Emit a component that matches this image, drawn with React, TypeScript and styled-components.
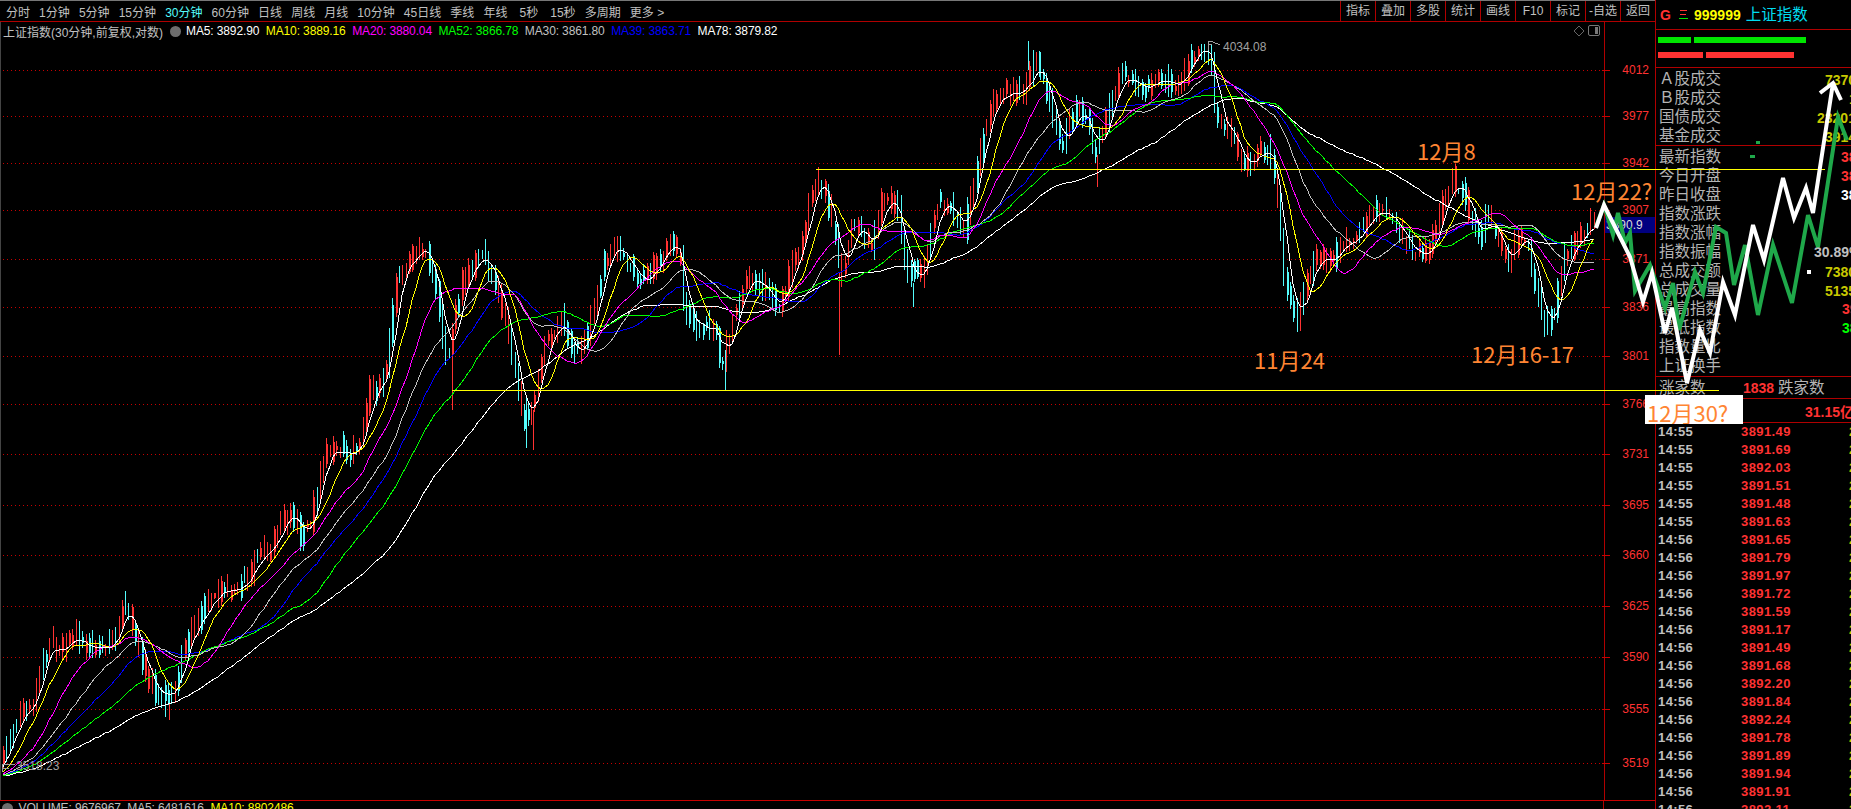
import React from "react";
import styled, { createGlobalStyle } from "styled-components";

const RED_LINE = "#b00000";
const CHART_TOP = 22;
const BAR_STEP = 3.3;

const leftTabs = ["分时", "1分钟", "5分钟", "15分钟", "30分钟", "60分钟", "日线", "周线", "月线", "10分钟", "45日线", "季线", "年线", "5秒", "15秒", "多周期", "更多 >"];
const rightTabs = ["指标", "叠加", "多股", "统计", "画线", "F10", "标记", "-自选", "返回"];
const axisPrices = [4012, 3977, 3942, 3907, 3871, 3836, 3801, 3766, 3731, 3695, 3660, 3625, 3590, 3555, 3519];

const maLabels = [
  { text: "MA5: 3892.90", color: "#ffffff" },
  { text: "MA10: 3889.16", color: "#ffff00" },
  { text: "MA20: 3880.04", color: "#ff00ff" },
  { text: "MA52: 3866.78", color: "#00ff00" },
  { text: "MA30: 3861.80", color: "#c0c0c0" },
  { text: "MA39: 3863.71", color: "#0000ff" },
  { text: "MA78: 3879.82", color: "#ffffff" },
];

const tradeBlock = [
  { label: "Ａ股成交", value: "7370亿", x: 1825, color: "#c8c800" },
  { label: "Ｂ股成交", value: "1.08亿", x: 1849, color: "#c8c800" },
  { label: "国债成交", value: "23201亿", x: 1817, color: "#c8c800" },
  { label: "基金成交", value: "3914亿", x: 1825, color: "#c8c800" },
];

const indexBlock = [
  { label: "最新指数", value: "3891.91", x: 1841, color: "#ff3232" },
  { label: "今日开盘", value: "3881.20", x: 1841, color: "#ff3232" },
  { label: "昨日收盘", value: "3861.00", x: 1841, color: "#ffffff" },
  { label: "指数涨跌", value: "", x: 1841, color: "#ff3232" },
  { label: "指数涨幅", value: "", x: 1841, color: "#ff3232" },
  { label: "指数振幅", value: "30.89%", x: 1814, color: "#c0c0c0" },
  { label: "总成交额", value: "7380亿", x: 1825, color: "#c8c800" },
  { label: "总成交量", value: "5135万", x: 1825, color: "#c8c800" },
  { label: "最高指数", value: "3900.11", x: 1842, color: "#ff3232" },
  { label: "最低指数", value: "3861.00", x: 1842, color: "#00ff00" },
  { label: "指数量比", value: "", x: 1842, color: "#c8c800" },
  { label: "上证换手", value: "", x: 1842, color: "#c8c800" },
];

const ticks: [string, string][] = [
  ["14:55", "3891.49"], ["14:55", "3891.69"], ["14:55", "3892.03"], ["14:55", "3891.51"], ["14:55", "3891.48"], ["14:55", "3891.63"],
  ["14:56", "3891.65"], ["14:56", "3891.79"], ["14:56", "3891.97"], ["14:56", "3891.72"], ["14:56", "3891.59"], ["14:56", "3891.17"],
  ["14:56", "3891.49"], ["14:56", "3891.68"], ["14:56", "3892.20"], ["14:56", "3891.84"], ["14:56", "3892.24"], ["14:56", "3891.78"],
  ["14:56", "3891.89"], ["14:56", "3891.94"], ["14:56", "3891.91"], ["14:56", "3892.11"],
];

const notes = [
  { text: "12月8", x: 1417, y: 138 },
  { text: "12月22?", x: 1571, y: 178 },
  { text: "11月24", x: 1254, y: 347 },
  { text: "12月16-17", x: 1471, y: 341 },
];

// the close line read off the chart, in page pixels
const closePath = [
  [2, 770], [10, 753], [20, 727], [28, 710], [35, 708], [42, 693], [50, 653], [57, 642], [63, 657], [77, 638], [90, 647], [117, 648],
  [132, 603], [143, 643], [150, 670], [163, 693], [170, 698], [182, 687], [187, 657], [200, 627], [218, 597], [230, 590], [245, 590],
  [263, 560], [277, 547], [290, 520], [297, 510], [307, 537], [317, 523], [330, 455], [343, 448], [357, 457], [367, 440], [377, 385],
  [383, 392], [393, 363], [403, 277], [410, 270], [423, 248], [433, 253], [440, 280], [450, 350], [455, 357], [460, 320], [470, 277],
  [488, 257], [493, 263], [503, 292], [513, 327], [523, 383], [530, 422], [537, 410], [550, 347], [568, 320], [577, 357], [593, 337],
  [610, 263], [620, 243], [630, 260], [643, 277], [653, 282], [677, 240], [687, 263], [690, 313], [703, 327], [723, 330], [727, 367],
  [740, 318], [750, 283], [760, 280], [773, 293], [783, 310], [790, 290], [807, 243], [820, 180], [830, 187], [840, 233], [847, 277],
  [860, 223], [877, 250], [890, 197], [903, 210], [910, 260], [917, 280], [930, 270], [943, 203], [957, 207], [970, 232], [978, 190],
  [997, 107], [1012, 92], [1028, 92], [1040, 63], [1050, 80], [1057, 110], [1067, 147], [1083, 108], [1093, 123], [1100, 157],
  [1110, 127], [1125, 80], [1143, 80], [1150, 90], [1163, 80], [1183, 87], [1200, 53], [1208, 47], [1217, 60], [1222, 120], [1233, 127],
  [1250, 167], [1270, 148], [1278, 157], [1283, 197], [1290, 277], [1302, 320], [1312, 287], [1320, 263], [1327, 257], [1338, 263],
  [1347, 240], [1357, 247], [1373, 220], [1387, 210], [1400, 223], [1417, 253], [1433, 255], [1443, 223], [1458, 182], [1473, 203],
  [1485, 240], [1493, 213], [1513, 265], [1523, 237], [1535, 243], [1540, 283], [1550, 325], [1560, 317], [1568, 263], [1580, 248],
  [1593, 227], [1600, 225],
];

const longWicks = [
  { x: 1028, y1: 41, y2: 70, up: false },
  { x: 1040, y1: 52, y2: 80, up: false },
  { x: 452, y1: 340, y2: 410, up: true },
  { x: 839, y1: 272, y2: 355, up: true },
  { x: 913, y1: 283, y2: 307, up: false },
  { x: 1097, y1: 155, y2: 187, up: true },
  { x: 533, y1: 410, y2: 450, up: true },
  { x: 526, y1: 395, y2: 448, up: false },
  { x: 169, y1: 690, y2: 720, up: true },
  { x: 165, y1: 680, y2: 717, up: false },
  { x: 725, y1: 350, y2: 390, up: false },
];

const whiteStroke = "1596,228 1604,205 1630,257 1643,302 1652,273 1665,333 1672,308 1687,383 1700,330 1710,353 1723,282 1735,315 1753,225 1764,260 1783,178 1794,218 1806,188 1813,213 1833,83";
const arrowHead = "1820,93 1833,83 1841,100";
const greenStroke = "1596,227 1604,205 1613,235 1618,213 1625,243 1630,233 1635,291 1650,265 1665,308 1673,283 1679,330 1695,272 1703,293 1716,227 1726,233 1734,285 1745,245 1758,315 1773,245 1792,303 1808,215 1818,247 1838,117 1847,140";

function priceY(price: number) {
  return Math.round(70 + 5285 * Math.log(4012 / price));
}

function pathAt(x: number) {
  if (x <= closePath[0][0]) return 776;
  for (let i = 1; i < closePath.length; i++) {
    const [x1, y1] = closePath[i];
    if (x <= x1) {
      const [x0, y0] = closePath[i - 1];
      return y0 + ((y1 - y0) * (x - x0)) / (x1 - x0);
    }
  }
  return closePath[closePath.length - 1][1];
}

function makeRandom(seed: number) {
  let s = seed;
  return () => {
    s = (s + 0x6d2b79f5) | 0;
    let t = Math.imul(s ^ (s >>> 15), 1 | s);
    t = (t + Math.imul(t ^ (t >>> 7), 61 | t)) ^ t;
    return ((t ^ (t >>> 14)) >>> 0) / 4294967296;
  };
}

const random = makeRandom(20251230);
const PRE_BARS = 80;
const barCount = Math.floor((1597 - 3) / BAR_STEP);
const closes: number[] = [];
for (let i = -PRE_BARS; i < barCount; i++) {
  const x = 3 + i * BAR_STEP;
  closes.push(pathAt(x + 6.6) + (i < 0 ? 0 : (random() - 0.5) * 7));
}

function maLine(period: number) {
  const pts: string[] = [];
  for (let i = 0; i < barCount; i++) {
    let sum = 0;
    for (let k = 0; k < period; k++) sum += closes[i + PRE_BARS - k];
    pts.push(`${(3 + i * BAR_STEP).toFixed(0)},${(sum / period).toFixed(0)}`);
  }
  return pts.join(" ");
}

const maLines = [
  { period: 78, color: "#ffffff" },
  { period: 39, color: "#0000ff" },
  { period: 52, color: "#00ff00" },
  { period: 30, color: "#c0c0c0" },
  { period: 20, color: "#ff00ff" },
  { period: 10, color: "#ffff00" },
  { period: 5, color: "#ffffff" },
].map((m) => ({ ...m, points: maLine(m.period) }));

function buildBars() {
  const wick = { up: "", down: "" };
  const body = { up: "", down: "" };
  for (let i = 0; i < barCount; i++) {
    const px = 3 + i * BAR_STEP;
    const x = Math.round(px);
    const c = closes[i + PRE_BARS];
    const o = closes[i + PRE_BARS - 1] + (random() - 0.5) * 6;
    const rising = pathAt(px + 12) < pathAt(px - 6);
    const up = random() < 0.22 ? !rising : rising;
    const top = Math.max(44, Math.min(o, c) - 2 - random() * 15);
    const bottom = Math.min(772, Math.max(o, c) + 2 + random() * 11);
    const key = up ? "up" : "down";
    wick[key] += `M${x} ${top.toFixed(0)}V${bottom.toFixed(0)}`;
    if (random() < 0.45) {
      body[key] += `M${x + 1} ${(top + 2 + random() * 5).toFixed(0)}V${(bottom - 2 - random() * 5).toFixed(0)}`;
    }
  }
  longWicks.forEach((w) => {
    wick[w.up ? "up" : "down"] += `M${w.x} ${w.y1}V${w.y2}`;
  });
  return { wick, body };
}

const bars = buildBars();

const GlobalStyle = createGlobalStyle`
  html, body {
    margin: 0;
    padding: 0;
    background: #000;
  }
  body {
    font-family: "Liberation Sans", "Noto Sans CJK SC", sans-serif;
    font-size: 12px;
    color: #c0c0c0;
  }
`;

function App() {
  return (
    <Page>
      <GlobalStyle />
      <Workspace>
        <Toolbar>
          <TabList>
            {leftTabs.map((tab) => (
              <Tab key={tab} $active={tab === "30分钟"} $wide={tab.endsWith("秒")}>
                {tab}
              </Tab>
            ))}
          </TabList>
          <ToolList>
            {rightTabs.map((tab) => (
              <ToolCell key={tab}>{tab}</ToolCell>
            ))}
          </ToolList>
        </Toolbar>
        <ChartRow>
          <ChartPane>
            <ChartSvg width={1604} height={778} viewBox={`0 ${CHART_TOP} 1604 778`}>
              {axisPrices.map((p) => (
                <line key={p} x1={3} x2={1604} y1={priceY(p) + 0.5} y2={priceY(p) + 0.5} stroke="#c80000" strokeDasharray="1 3" />
              ))}
              <path d={bars.wick.up} stroke="#ff3232" fill="none" />
              <path d={bars.body.up} stroke="#ff3232" fill="none" />
              <path d={bars.wick.down} stroke="#54fcfc" fill="none" />
              <path d={bars.body.down} stroke="#54fcfc" fill="none" />
              {maLines.map((m) => (
                <polyline key={m.period} points={m.points} stroke={m.color} fill="none" />
              ))}
              <path d="M1208 41H1213M1208 44H1212M1208 41V50M1213 42L1220 45" stroke="#a0a0a0" fill="none" />
              <path d="M2 764H15M2 768H9M2 764V772" stroke="#a0a0a0" fill="none" />
            </ChartSvg>
            <TitleRow>
              <span>上证指数(30分钟,前复权,对数)</span>
              <RoundIcon />
              {maLabels.map((m) => (
                <MaLabel key={m.text} $color={m.color}>
                  {m.text}
                </MaLabel>
              ))}
              <CornerIcons>
                <svg width="28" height="12" viewBox="0 0 28 12">
                  <path d="M6 1L11 6L6 11L1 6Z" fill="none" stroke="#666" />
                  <rect x="15.5" y="0.5" width="11" height="10" rx="1.5" fill="none" stroke="#777" />
                  <rect x="22" y="2" width="3" height="7" fill="#777" />
                </svg>
              </CornerIcons>
            </TitleRow>
            <PeakLabel>4034.08</PeakLabel>
            <LowLabel>3518.23</LowLabel>
          </ChartPane>
          <AxisPane>
            {axisPrices.map((p) => (
              <React.Fragment key={p}>
                <AxisTick style={{ top: priceY(p) - CHART_TOP }} />
                <AxisLabel style={{ top: priceY(p) - CHART_TOP - 8 }}>{p}</AxisLabel>
              </React.Fragment>
            ))}
            <LastPrice>3890.9</LastPrice>
          </AxisPane>
        </ChartRow>
        <VolumeStrip>
          <VolumeCell>
            <RoundIcon />
            <MaLabel $color="#c0c0c0">VOLUME: 9676967</MaLabel>
            <MaLabel $color="#c0c0c0">MA5: 6481616</MaLabel>
            <MaLabel $color="#ffff00">MA10: 8802486</MaLabel>
          </VolumeCell>
        </VolumeStrip>
      </Workspace>

      <SidePanel>
        <SideHeader>
          <SideG>G</SideG>
          <svg width="10" height="10" viewBox="0 0 10 10">
            <rect x="1" y="0" width="7" height="1" fill="#ff3232" />
            <rect x="1" y="4" width="6" height="1" fill="#ff3232" />
            <rect x="0" y="8" width="9" height="1" fill="#00e600" />
          </svg>
          <SideCode>999999</SideCode>
          <SideName>上证指数</SideName>
        </SideHeader>
        <MeterBlock>
          <MeterRow>
            <MeterBar $color="#00e600" $width={33} />
            <MeterBar $color="#00e600" $width={112} />
          </MeterRow>
          <MeterRow>
            <MeterBar $color="#ff3232" $width={45} />
            <MeterBar $color="#ff3232" $width={88} />
          </MeterRow>
        </MeterBlock>
        <InfoBlock $height={78}>
          {tradeBlock.map((row) => (
            <InfoRow key={row.label}>
              <InfoLabel>{row.label}</InfoLabel>
              <InfoValue $x={row.x} $color={row.color}>
                {row.value}
              </InfoValue>
            </InfoRow>
          ))}
        </InfoBlock>
        <InfoBlock $height={231}>
          {indexBlock.map((row) => (
            <InfoRow key={row.label}>
              <InfoLabel>{row.label}</InfoLabel>
              <InfoValue $x={row.x} $color={row.color}>
                {row.value}
              </InfoValue>
            </InfoRow>
          ))}
        </InfoBlock>
        <CountRow>
          <InfoLabel>涨家数</InfoLabel>
          <InfoValue $x={1743} $color="#ff3232">
            1838
          </InfoValue>
          <FallLabel>跌家数</FallLabel>
        </CountRow>
        <TotalRow>
          <InfoValue $x={1805} $color="#ff3232">
            31.15亿
          </InfoValue>
        </TotalRow>
        <TickList>
          {ticks.map(([time, price], i) => (
            <TickRow key={i}>
              <TickTime>{time}</TickTime>
              <TickPrice>{price}</TickPrice>
              <TickVolume>2</TickVolume>
            </TickRow>
          ))}
        </TickList>
      </SidePanel>

      <Drawing width={1851} height={809} viewBox="0 0 1851 809">
        <line x1={816} x2={1825} y1={169.5} y2={169.5} stroke="#ffff00" />
        <line x1={452} x2={1719} y1={390.5} y2={390.5} stroke="#ffff00" />
        <polyline points={greenStroke} fill="none" stroke="#1fa84a" strokeWidth={4} />
        <polyline points={whiteStroke} fill="none" stroke="#ffffff" strokeWidth={4} />
        <polyline points={arrowHead} fill="none" stroke="#ffffff" strokeWidth={4} />
        <rect x={1756} y={141} width={4} height={3} fill="#1fa84a" />
        <rect x={1750} y={155} width={5} height={3} fill="#1fa84a" />
        <rect x={1807} y={270} width={4} height={4} fill="#ffffff" />
      </Drawing>

      {notes.map((n) => (
        <Note key={n.text} $x={n.x} $y={n.y}>
          {n.text}
        </Note>
      ))}
      <BoxedNote>12月30?</BoxedNote>
    </Page>
  );
}

const Page = styled.div`
  position: relative;
  display: flex;
  width: 1851px;
  height: 809px;
  overflow: hidden;
  background: #000;
`;

const Workspace = styled.div`
  display: flex;
  flex-direction: column;
  width: 1655px;
  flex-shrink: 0;
`;

const Toolbar = styled.div`
  display: flex;
  justify-content: space-between;
  height: 20px;
  border-top: 1px solid #777;
  border-bottom: 1px solid ${RED_LINE};
`;

const TabList = styled.div`
  display: flex;
  align-items: center;
  gap: 9.1px;
  padding-left: 6px;
  white-space: nowrap;
`;

const Tab = styled.span<{ $active: boolean; $wide: boolean }>`
  color: ${(p) => (p.$active ? "#54fcfc" : "#c0c0c0")};
  margin-left: ${(p) => (p.$wide ? "3px" : "0")};
`;

const ToolList = styled.div`
  display: flex;
`;

const ToolCell = styled.div`
  width: 35px;
  box-sizing: border-box;
  border-left: 1px solid ${RED_LINE};
  text-align: center;
  line-height: 20px;
`;

const ChartRow = styled.div`
  display: flex;
  height: 778px;
`;

const ChartPane = styled.div`
  position: relative;
  width: 1604px;
  box-shadow: inset 1px 0 0 #444;
`;

const ChartSvg = styled.svg`
  display: block;
  shape-rendering: crispEdges;
`;

const TitleRow = styled.div`
  position: absolute;
  top: 0;
  left: 3px;
  right: 3px;
  display: flex;
  align-items: center;
  gap: 6.5px;
  height: 18px;
  white-space: nowrap;
`;

const RoundIcon = styled.i`
  display: block;
  width: 11px;
  height: 11px;
  border-radius: 50%;
  background: #6e6e6e;
  margin-right: -1px;
`;

const MaLabel = styled.span<{ $color: string }>`
  color: ${(p) => p.$color};
  letter-spacing: -0.12px;
`;

const CornerIcons = styled.div`
  display: flex;
  margin-left: auto;
`;

const PeakLabel = styled.span`
  position: absolute;
  left: 1223px;
  top: 17px;
  color: #a0a0a0;
  line-height: 16px;
`;

const LowLabel = styled.span`
  position: absolute;
  left: 16px;
  top: 736px;
  color: #a0a0a0;
  line-height: 16px;
`;

const AxisPane = styled.div`
  position: relative;
  width: 50px;
  border-left: 1px solid ${RED_LINE};
`;

const AxisTick = styled.i`
  position: absolute;
  left: -3px;
  width: 8px;
  height: 1px;
  background: #c80000;
`;

const AxisLabel = styled.span`
  position: absolute;
  right: 6px;
  color: #ff3232;
  line-height: 16px;
`;

const LastPrice = styled.div`
  position: absolute;
  top: 195px;
  left: 0;
  right: 0;
  height: 16px;
  padding-left: 1px;
  background: #000080;
  color: #dcdcdc;
  line-height: 16px;
`;

const VolumeStrip = styled.div`
  flex: 1;
  display: flex;
  border-top: 1px solid #c80000;
  overflow: hidden;
`;

const VolumeCell = styled.div`
  display: flex;
  align-items: center;
  gap: 6.5px;
  width: 1604px;
  height: 14px;
  padding-left: 2px;
  box-sizing: border-box;
  border-right: 1px solid ${RED_LINE};
`;

const SidePanel = styled.div`
  display: flex;
  flex-direction: column;
  width: 196px;
  box-sizing: border-box;
  border-left: 1px solid ${RED_LINE};
  overflow: hidden;
`;

const SideHeader = styled.div`
  display: flex;
  align-items: center;
  gap: 5px;
  flex-shrink: 0;
  height: 29px;
  padding-left: 4px;
  box-sizing: content-box;
  border-bottom: 1px solid ${RED_LINE};
  white-space: nowrap;
`;

const SideG = styled.span`
  color: #ff3232;
  font-size: 14px;
  font-weight: bold;
  width: 14px;
`;

const SideCode = styled.span`
  color: #ffff00;
  font-size: 14px;
  font-weight: bold;
`;

const SideName = styled.span`
  color: #00dcf0;
  font-size: 15.5px;
  line-height: 1;
`;

const MeterBlock = styled.div`
  display: flex;
  flex-direction: column;
  gap: 9px;
  flex-shrink: 0;
  height: 30px;
  padding: 7px 0 0 2px;
  border-bottom: 1px solid ${RED_LINE};
`;

const MeterRow = styled.div`
  display: flex;
  gap: 3px;
`;

const MeterBar = styled.i<{ $color: string; $width: number }>`
  display: block;
  height: 6px;
  width: ${(p) => p.$width}px;
  background: ${(p) => p.$color};
`;

const InfoBlock = styled.div<{ $height: number }>`
  flex-shrink: 0;
  height: ${(p) => p.$height}px;
  padding-top: 1px;
  box-sizing: border-box;
  border-bottom: 1px solid ${RED_LINE};
`;

const InfoRow = styled.div`
  display: flex;
  align-items: center;
  height: 19px;
  padding-left: 3px;
  white-space: nowrap;
`;

const InfoLabel = styled.span`
  flex-shrink: 0;
  width: 64px;
  font-size: 15.5px;
  line-height: 19px;
  color: #b4b4b4;
  white-space: nowrap;
`;

const InfoValue = styled.span<{ $x: number; $color: string }>`
  position: absolute;
  left: ${(p) => p.$x}px;
  color: ${(p) => p.$color};
  font-size: 14px;
  font-weight: bold;
  white-space: nowrap;
`;

const CountRow = styled.div`
  flex-shrink: 0;
  display: flex;
  align-items: center;
  height: 21px;
  padding-left: 3px;
  border-bottom: 1px solid ${RED_LINE};
`;

const FallLabel = styled(InfoLabel)`
  position: absolute;
  left: 1778px;
`;

const TotalRow = styled.div`
  flex-shrink: 0;
  display: flex;
  align-items: center;
  height: 23px;
  border-bottom: 1px solid ${RED_LINE};
`;

const TickList = styled.div`
  display: flex;
  flex-direction: column;
`;

const TickRow = styled.div`
  display: grid;
  grid-template-columns: 83px 108px 20px;
  flex-shrink: 0;
  height: 18px;
  padding-left: 2px;
  font-size: 13px;
  font-weight: bold;
  line-height: 18px;
  letter-spacing: 0.4px;
`;

const TickTime = styled.span`
  color: #c0c0c0;
`;

const TickPrice = styled.span`
  color: #ff3232;
`;

const TickVolume = styled.span`
  color: #c8c800;
`;

const Drawing = styled.svg`
  position: absolute;
  top: 0;
  left: 0;
  pointer-events: none;
`;

const Note = styled.span<{ $x: number; $y: number }>`
  position: absolute;
  left: ${(p) => p.$x}px;
  top: ${(p) => p.$y}px;
  font-family: "Noto Sans CJK SC", sans-serif;
  font-size: 22px;
  line-height: 24px;
  color: #ff8533;
  white-space: nowrap;
`;

const BoxedNote = styled.div`
  position: absolute;
  left: 1645px;
  top: 395px;
  width: 98px;
  height: 29px;
  padding-left: 2px;
  box-sizing: border-box;
  background: #fff;
  font-family: "Noto Sans CJK SC", sans-serif;
  font-size: 22px;
  line-height: 34px;
  color: #ff8533;
  white-space: nowrap;
  overflow: hidden;
`;

export default App;
